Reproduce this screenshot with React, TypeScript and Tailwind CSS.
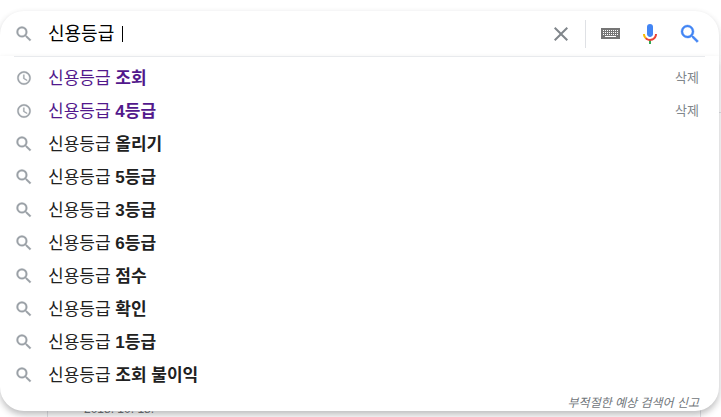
import { useState } from "react";

interface Suggestion {
  tail: string;
  visited?: boolean;
}

const QUERY = "신용등급";

const SUGGESTIONS: Suggestion[] = [
  { tail: "조회", visited: true },
  { tail: "4등급", visited: true },
  { tail: "올리기" },
  { tail: "5등급" },
  { tail: "3등급" },
  { tail: "6등급" },
  { tail: "점수" },
  { tail: "확인" },
  { tail: "1등급" },
  { tail: "조회 불이익" },
];

const KEY_COLUMNS = [2, 4, 6, 8, 10, 12, 14, 16];
const KEY_ROWS = [2, 4, 6];

function SearchIcon({ className }: { className: string }) {
  return (
    <svg
      viewBox="0 0 24 24"
      fill="currentColor"
      stroke="currentColor"
      strokeWidth="0.4"
      className={className}
      aria-hidden="true"
    >
      <path d="M15.5 14h-.79l-.28-.27A6.471 6.471 0 0 0 16 9.5 6.5 6.5 0 1 0 9.5 16c1.61 0 3.09-.59 4.23-1.57l.27.28v.79l5 4.99L20.49 19l-4.99-5zm-6 0C7.01 14 5 11.99 5 9.5S7.01 5 9.5 5 14 7.01 14 9.5 11.99 14 9.5 14z" />
    </svg>
  );
}

function ClockIcon() {
  return (
    <svg
      viewBox="0 0 24 24"
      fill="currentColor"
      stroke="currentColor"
      strokeWidth="0.5"
      className="size-4 text-[#9aa0a6]"
      aria-hidden="true"
    >
      <path d="M11.99 2C6.47 2 2 6.48 2 12s4.47 10 9.99 10C17.52 22 22 17.52 22 12S17.52 2 11.99 2zM12 20c-4.42 0-8-3.58-8-8s3.58-8 8-8 8 3.58 8 8-3.58 8-8 8z" />
      <path d="M12.5 7H11v6l5.25 3.15.75-1.23-4.5-2.67z" />
    </svg>
  );
}

function ClearIcon() {
  return (
    <svg viewBox="0 0 24 24" fill="currentColor" className="size-6 text-[#80868b]" aria-hidden="true">
      <path d="M19 6.41L17.59 5 12 10.59 6.41 5 5 6.41 10.59 12 5 17.59 6.41 19 12 13.41 17.59 19 19 17.59 13.41 12z" />
    </svg>
  );
}

function KeyboardIcon() {
  return (
    <svg viewBox="0 0 19 11" className="h-[11px] w-[19px]" shapeRendering="crispEdges" aria-hidden="true">
      <rect width="19" height="11" fill="#757575" />
      {KEY_ROWS.map((y) =>
        KEY_COLUMNS.map((x) => <rect key={`${x}-${y}`} x={x} y={y} width="1" height="1" fill="#fff" />),
      )}
      <rect x="4" y="8" width="11" height="1" fill="#fff" />
    </svg>
  );
}

function MicIcon() {
  return (
    <svg viewBox="0 0 24 24" className="size-6" aria-hidden="true">
      <path fill="#4285f4" d="M12 15c1.66 0 3-1.31 3-2.97V5.01a3 3 0 0 0-6 0v7.02C9 13.69 10.34 15 12 15z" />
      <path fill="#34a853" d="M11 18.08h2V22h-2z" />
      <path fill="#fbbc05" d="M7.05 16.87c-1.27-1.33-2.05-2.83-2.05-4.87h2c0 1.45.56 2.42 1.47 3.38v.32l-1.15 1.18z" />
      <path fill="#ea4335" d="M12 16.93a4.97 4.97 0 0 1-3.54-1.55l-1.41 1.49c1.26 1.34 3.02 2.13 4.95 2.13 3.87 0 6.99-2.92 6.99-7h-1.99c0 2.92-2.24 4.93-5 4.93z" />
    </svg>
  );
}

function SuggestionRow({ tail, visited }: Suggestion) {
  return (
    <li className="flex h-[33px] items-center">
      <span className="flex w-5 shrink-0 justify-center">
        {visited ? <ClockIcon /> : <SearchIcon className="size-5 text-[#9aa0a6]" />}
      </span>
      <a
        href="#"
        className={`ml-3.5 flex-1 pt-0.5 text-[17px] leading-6 ${visited ? "text-[#52188c]" : "text-[#212121]"}`}
      >
        {QUERY} <b className="font-bold">{tail}</b>
      </a>
      {visited && (
        <button type="button" className="text-[13px] leading-4 text-[#80868b]">
          삭제
        </button>
      )}
    </li>
  );
}

export default function App() {
  const [query, setQuery] = useState(`${QUERY} `);

  return (
    <div className="relative h-screen overflow-hidden bg-white font-['Liberation_Sans','Noto_Sans_CJK_KR',sans-serif]">
      {/* Search result under the dropdown */}
      <div className="h-28 w-full" />
      <div className="h-px bg-[#dfe1e5]" />
      <div className="mr-5 ml-[47px] flex h-full items-start border-x border-[#dfe1e5] pt-72 pl-9">
        <span className="text-[12px] leading-4 text-[#70757a]">2018. 10. 18.</span>
      </div>

      <form
        className="absolute inset-x-0 top-[11px] mr-0.5"
        role="search"
        onSubmit={(e) => e.preventDefault()}
      >
        <div className="rounded-t-3xl bg-white shadow-[0_2px_5px_1px_rgba(64,60,67,0.16)]">
          <div className="flex h-[45px] items-center pr-[17px] pl-3.5">
            <SearchIcon className="size-5 shrink-0 text-[#9aa0a6]" />
            <div className="ml-3.5 flex min-w-0 flex-1 items-center">
              <input
                type="text"
                aria-label="검색"
                value={query}
                onChange={(e) => setQuery(e.target.value)}
                className="field-sizing-content max-w-full pr-[3px] text-[18px] leading-6 whitespace-pre text-black caret-transparent outline-none"
              />
              <span className="h-4 w-px shrink-0 bg-black" />
            </div>
            <button type="button" aria-label="지우기">
              <ClearIcon />
            </button>
            <span className="mr-[15px] ml-3 h-7 w-px bg-[#dfe1e5]" />
            <button type="button" aria-label="입력 도구">
              <KeyboardIcon />
            </button>
            <button type="button" aria-label="음성 검색" className="ml-[18px]">
              <MicIcon />
            </button>
            <button type="submit" aria-label="Google 검색" className="ml-4">
              <SearchIcon className="size-6 text-[#4285f4]" />
            </button>
          </div>
        </div>

        <div className="relative rounded-b-3xl bg-white shadow-[0_4px_6px_0_rgba(32,33,36,0.28)]">
          <div className="mx-3.5 border-t border-[#e8eaed]" />
          <ul className="pt-1 pr-5 pl-3.5">
            {SUGGESTIONS.map((item) => (
              <SuggestionRow key={item.tail} {...item} />
            ))}
          </ul>
          <div className="flex justify-end pt-[5px] pr-5 pb-px">
            <a href="#" className="text-[12px] leading-[14px] text-[#70757a] italic">
              부적절한 예상 검색어 신고
            </a>
          </div>
        </div>
      </form>
    </div>
  );
}
